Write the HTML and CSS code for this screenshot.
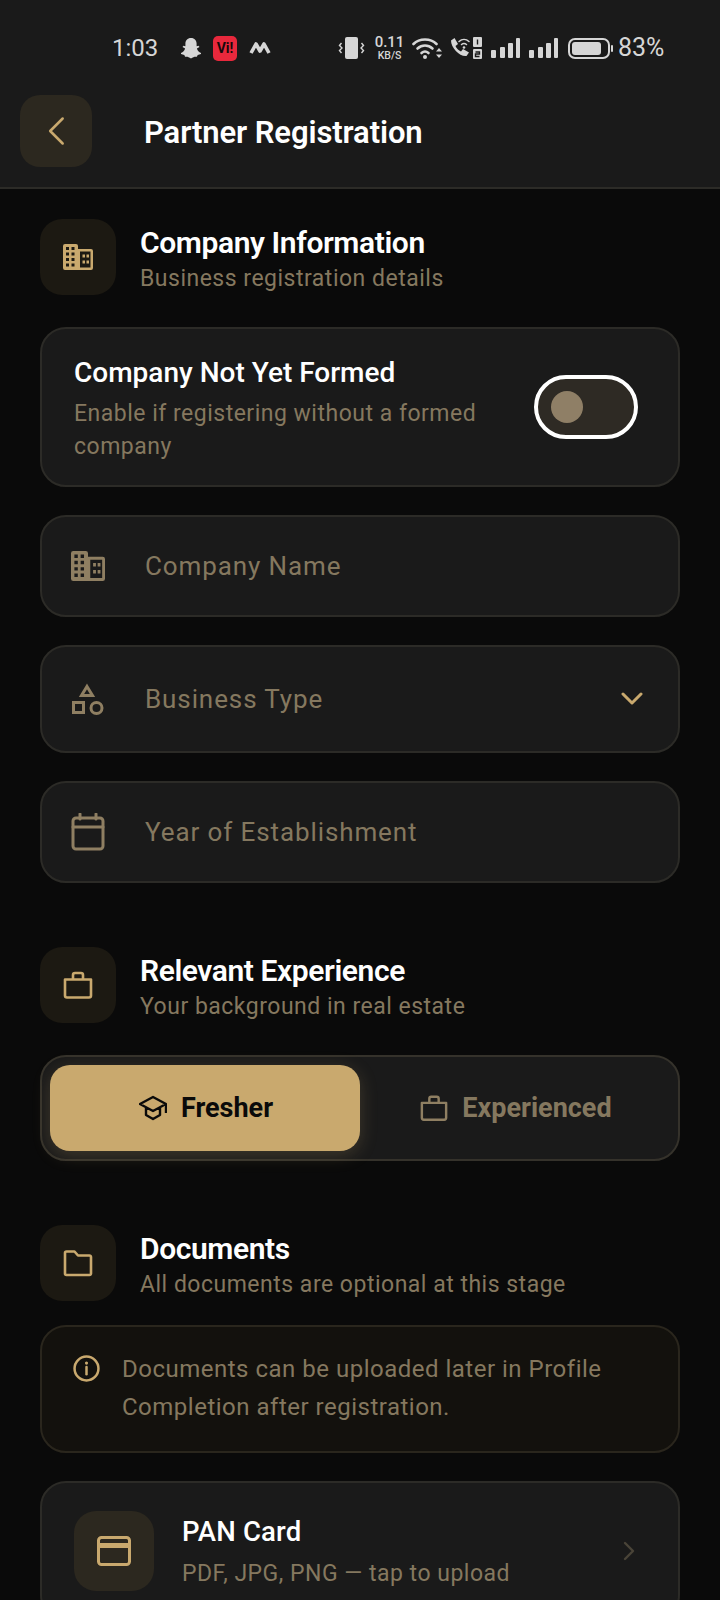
FILE: index.html
```html
<!DOCTYPE html>
<html lang="en">
<head>
<meta charset="utf-8">
<title>Partner Registration</title>
<link rel="stylesheet" href="styles.css">
</head>
<body>
<div class="screen">
  <header class="topbar">
    <div class="status">
      <div class="status-left">
        <span class="time">1:03</span>
        <svg class="st-snap" viewBox="0 0 22 21"><path fill="#d6d6d6" d="M11 0c3.600 0 5.600 2.600 5.600 5.600v2.600l2-.5.9 1.200-2.600 1.600c.6 2 2 3.600 4.100 4.500v1.100l-3.300 1-.8 1.700c-2-.4-3.600.1-5.900 1.700-2.300-1.600-3.900-2.100-5.900-1.700l-.8-1.700-3.300-1V15c2.100-.9 3.500-2.500 4.100-4.500L2.500 8.900l.9-1.200 2 .5V5.600C5.400 2.600 7.400 0 11 0z"/></svg>
        <span class="st-vi">Vi!</span>
        <svg class="st-m" viewBox="0 0 22 12"><path fill="none" stroke="#d6d6d6" stroke-width="3.600" stroke-linejoin="round" d="M2 11 7 2l4 7 4-7 5 9"/></svg>
      </div>
      <div class="status-right">
        <svg class="st-vib" viewBox="0 0 27 22"><rect x="7" y="0" width="13" height="22" rx="2" fill="#d6d6d6"/><path fill="none" stroke="#d6d6d6" stroke-width="1.400" d="M3.500 6 1.500 8.500 4 11 1.500 13.500 3.500 16M23.500 6l2 2.500L23 11l2.500 2.500-2 2.500"/></svg>
        <div class="st-speed"><span class="st-val">0.11</span><span class="st-unit">KB/S</span></div>
        <svg class="st-wifi" viewBox="0 0 30 22"><g fill="none" stroke="#d6d6d6" stroke-width="2.600" stroke-linecap="round"><path d="M1.500 7C7.500 1 18.500 1 24.500 7"/><path d="M5.500 11.500c4.500-4 10.500-4 15 0"/><path d="M9.500 16c2.300-2 4.700-2 7 0"/></g><circle cx="13" cy="20" r="2" fill="#d6d6d6"/><path fill="#d6d6d6" d="M27 11l3 3.500h-6zM27 21l3-3.500h-6z"/></svg>
        <svg class="st-call" viewBox="0 0 33 22"><path fill="#d6d6d6" d="M2 3.500 5.500 1l3.500 6-2.500 2c1 2.500 3 4.500 5.500 5.500l2-2.500 6 3.500-2.500 3.500C11 20 2 11 2 3.500z"/><g fill="none" stroke="#d6d6d6" stroke-width="1.500" stroke-linecap="round"><path d="M10 4.500c3-2.800 7-2.800 10 0"/><path d="M12.500 7.500c1.700-1.400 3.300-1.400 5 0"/></g><circle cx="15" cy="10.500" r="1.300" fill="#d6d6d6"/><rect x="24" y="0" width="9" height="10" rx="1" fill="#d6d6d6"/><rect x="24" y="12" width="9" height="10" rx="1" fill="#d6d6d6"/><path stroke="#1a1a1a" stroke-width="1.400" fill="none" d="M28.500 2.500v5M26.500 15h4v2h-4v2.500h4"/></svg>
        <svg class="st-sig" viewBox="0 0 29 20"><g fill="#d6d6d6"><rect x="0" y="12" width="5" height="8" rx="1"/><rect x="9" y="9" width="5" height="11" rx="1"/><rect x="17" y="5" width="5" height="15" rx="1"/><rect x="25" y="0" width="4" height="20" rx="1"/></g></svg>
        <svg class="st-sig" viewBox="0 0 29 20"><g fill="#d6d6d6"><rect x="0" y="12" width="5" height="8" rx="1"/><rect x="9" y="9" width="5" height="11" rx="1"/><rect x="17" y="5" width="5" height="15" rx="1"/><rect x="25" y="0" width="4" height="20" rx="1"/></g></svg>
        <svg class="st-bat" viewBox="0 0 45 21"><rect x="1" y="1" width="40" height="19" rx="6" fill="none" stroke="#d6d6d6" stroke-width="2"/><rect x="4" y="4" width="29" height="13" rx="3" fill="#d6d6d6"/><rect x="43" y="7" width="2" height="7" rx="1" fill="#d6d6d6"/></svg>
        <span class="pct">83%</span>
      </div>
    </div>
    <div class="navrow">
      <button class="back" type="button" aria-label="Back">
        <svg viewBox="0 0 24 36" class="back-ic"><path d="M20 3 5 18l15 15" fill="none" stroke="#c9a96e" stroke-width="3" stroke-linecap="round" stroke-linejoin="round"/></svg>
      </button>
      <h1 class="title">Partner Registration</h1>
    </div>
  </header>

  <main class="content">
    <section class="sec-head sec-first">
      <div class="sec-icon">
        <svg class="ic-build" viewBox="0 0 30 26"><path class="fill-gold" fill-rule="evenodd" d="M2 0h11a2 2 0 0 1 2 2v3h13a2 2 0 0 1 2 2v17a2 2 0 0 1-2 2H2a2 2 0 0 1-2-2V2a2 2 0 0 1 2-2zM3 3v3h3V3zm5.500 0v3h3V3zM3 8.500v3h3v-3zm5.500 0v3h3v-3zM3 14v3h3v-3zm5.500 0v3h3v-3zM3 19.500v3h3v-3zm5.500 0v3h3v-3zM17 7.500v16h10.500v-16zm2.500 3h2.500v3h-2.500zm4 0h2.500v3h-2.500zm-4 6h2.500v3h-2.500zm4 0h2.500v3h-2.500z"/></svg>
      </div>
      <div class="sec-text">
        <h2 class="sec-title">Company Information</h2>
        <p class="sec-sub">Business registration details</p>
      </div>
    </section>

    <div class="card toggle-card">
      <div class="toggle-text">
        <div class="toggle-title">Company Not Yet Formed</div>
        <div class="toggle-sub">Enable if registering without a formed company</div>
      </div>
      <div class="switch"><span class="thumb"></span></div>
    </div>

    <div class="card field">
      <svg class="field-ic field-build" viewBox="0 0 30 26" preserveAspectRatio="none"><path class="fill-muted" fill-rule="evenodd" d="M2 0h11a2 2 0 0 1 2 2v3h13a2 2 0 0 1 2 2v17a2 2 0 0 1-2 2H2a2 2 0 0 1-2-2V2a2 2 0 0 1 2-2zM3 3v3h3V3zm5.500 0v3h3V3zM3 8.500v3h3v-3zm5.500 0v3h3v-3zM3 14v3h3v-3zm5.500 0v3h3v-3zM3 19.500v3h3v-3zm5.500 0v3h3v-3zM17 7.500v16h10.500v-16zm2.500 3h2.500v3h-2.500zm4 0h2.500v3h-2.500zm-4 6h2.500v3h-2.500zm4 0h2.500v3h-2.500z"/></svg>
      <span class="field-label">Company Name</span>
    </div>

    <div class="card field field-tall">
      <svg class="field-ic" viewBox="0 0 34 34"><g fill="none" stroke="#8f7f62" stroke-width="3"><path d="M16 4.500 21.500 13.500H10.500z"/><rect x="2.500" y="20.500" width="10" height="10"/><circle cx="25.500" cy="26" r="5.500"/></g></svg>
      <span class="field-label">Business Type</span>
      <svg class="chev" viewBox="0 0 22 14"><path d="M2 2l9 9 9-9" fill="none" stroke="#c9a96e" stroke-width="3" stroke-linecap="round" stroke-linejoin="round"/></svg>
    </div>

    <div class="card field">
      <svg class="field-ic field-cal" viewBox="0 0 34 38"><g fill="none" stroke="#8f7f62" stroke-width="3" stroke-linecap="round"><rect x="2" y="5" width="30" height="31" rx="3"/><path d="M2 14h30M9 1v5M25 1v5"/></g></svg>
      <span class="field-label">Year of Establishment</span>
    </div>

    <section class="sec-head sec-next">
      <div class="sec-icon">
        <svg class="ic-30" viewBox="0 0 30 30"><path d="M2 9.500h26v16a2 2 0 0 1-2 2H4a2 2 0 0 1-2-2zM10 9.500V5a2 2 0 0 1 2-2h6a2 2 0 0 1 2 2v4.500" fill="none" stroke="#c9a96e" stroke-width="2.600" stroke-linejoin="round"/></svg>
      </div>
      <div class="sec-text">
        <h2 class="sec-title">Relevant Experience</h2>
        <p class="sec-sub">Your background in real estate</p>
      </div>
    </section>

    <div class="card segment">
      <div class="seg seg-on">
        <svg class="seg-ic" viewBox="0 0 28 28"><path d="M14 3 27 10 14 17 1 10zM7 13.500V21l7 4 7-4v-7.500M27 10v9" fill="none" stroke="#0a0a0a" stroke-width="2.400" stroke-linejoin="round"/></svg>
        <span>Fresher</span>
      </div>
      <div class="seg seg-off">
        <svg class="seg-ic" viewBox="0 0 30 30"><path d="M2 9.500h26v16a2 2 0 0 1-2 2H4a2 2 0 0 1-2-2zM10 9.500V5a2 2 0 0 1 2-2h6a2 2 0 0 1 2 2v4.500" fill="none" stroke="#8f7f62" stroke-width="2.600" stroke-linejoin="round"/></svg>
        <span>Experienced</span>
      </div>
    </div>

    <section class="sec-head sec-next">
      <div class="sec-icon">
        <svg class="ic-30" viewBox="0 0 30 30"><path d="M2 5a1.500 1.500 0 0 1 1.500-1.500h8L15 7.500h11.500A1.500 1.500 0 0 1 28 9v16.500a1.500 1.500 0 0 1-1.500 1.500h-23A1.500 1.500 0 0 1 2 25.500z" fill="none" stroke="#c9a96e" stroke-width="2.600" stroke-linejoin="round"/></svg>
      </div>
      <div class="sec-text">
        <h2 class="sec-title">Documents</h2>
        <p class="sec-sub">All documents are optional at this stage</p>
      </div>
    </section>

    <div class="card info">
      <svg class="info-ic" viewBox="0 0 26 26"><circle cx="13" cy="13" r="11.500" fill="none" stroke="#c9a96e" stroke-width="2.400"/><path d="M13 11.500v7" stroke="#c9a96e" stroke-width="2.400" stroke-linecap="round"/><circle cx="13" cy="7.800" r="1.500" fill="#c9a96e"/></svg>
      <p class="info-text">Documents can be uploaded later in Profile Completion after registration.</p>
    </div>

    <div class="card doc">
      <div class="doc-icon">
        <svg class="doc-svg" viewBox="0 0 34 30"><rect x="1.500" y="1.500" width="31" height="27" rx="3" fill="none" stroke="#c9a96e" stroke-width="3"/><rect x="2" y="7" width="30" height="5" fill="#c9a96e"/></svg>
      </div>
      <div class="doc-text">
        <div class="doc-title">PAN Card</div>
        <div class="doc-sub">PDF, JPG, PNG — tap to upload</div>
      </div>
      <svg class="doc-chev" viewBox="0 0 14 20"><path d="M3 2l8 8-8 8" fill="none" stroke="#4a4438" stroke-width="2.400" stroke-linecap="round" stroke-linejoin="round"/></svg>
    </div>
  </main>
</div>
</body>
</html>
```
FILE: styles.css
```css
* { box-sizing: border-box; margin: 0; padding: 0; }
html, body { width: 720px; height: 1600px; overflow: hidden; background: #0a0a0a; }
body { font-family: Roboto, "Liberation Sans", sans-serif; color: #fff; }
.screen { width: 720px; height: 1600px; overflow: hidden; }

.topbar { height: 189px; background: #1a1a1a; border-bottom: 2px solid #2c2b27; }
.status { height: 95px; padding: 35px 54px 0 112px; display: flex; justify-content: space-between; align-items: flex-start; color: #d6d6d6; }
.status-left, .status-right { display: flex; align-items: center; height: 26px; }
.time { font-size: 24px; width: 45px; line-height: 26px; }
.st-snap { width: 22px; height: 21px; margin-left: 23px; }
.st-vi { width: 24px; height: 25px; margin-left: 11px; border-radius: 5px; background: #e8283c; color: #16090a; font: 700 14px/25px Roboto, sans-serif; text-align: center; }
.st-m { width: 22px; height: 12px; margin-left: 12px; }
.st-vib { width: 27px; height: 22px; }
.st-speed { width: 27px; height: 26px; margin-left: 11px; display: flex; flex-direction: column; align-items: center; font-weight: 500; }
.st-val { font-size: 15px; line-height: 15px; }
.st-unit { font-size: 10.500px; line-height: 11px; }
.st-wifi { width: 30px; height: 22px; margin-left: 9px; }
.st-call { width: 33px; height: 22px; margin-left: 7px; }
.st-sig { width: 29px; height: 20px; margin-left: 9px; }
.st-bat { width: 45px; height: 21px; margin-left: 10px; }
.pct { font-size: 25px; line-height: 26px; margin-left: 5px; width: 48px; }

.navrow { display: flex; align-items: center; padding-left: 20px; }
.back { width: 72px; height: 72px; border: 0; border-radius: 20px; background: #2c281f; display: flex; align-items: center; justify-content: center; }
.back-ic { width: 20px; height: 30px; }
.title { margin-left: 52px; padding-top: 4px; height: 72px; font-size: 31px; font-weight: 600; line-height: 68px; letter-spacing: -0.1px; color: #fff; }

.content { padding: 0 40px; display: flex; flex-direction: column; }
.sec-head { display: flex; align-items: center; height: 76px; gap: 24px; }
.sec-first { margin-top: 30px; }
.sec-next { margin-top: 64px; }
.sec-icon { width: 76px; height: 76px; border-radius: 22px; background: #1c1912; display: flex; align-items: center; justify-content: center; flex: none; }
.ic-30 { width: 30px; height: 30px; }
.ic-build { width: 30px; height: 26px; }
.fill-gold { fill: #c9a96e; }
.fill-muted { fill: #8f7f62; }
.sec-text { display: flex; flex-direction: column; padding-top: 8px; }
.sec-title { font-size: 30px; font-weight: 600; line-height: 36px; letter-spacing: -0.4px; color: #fff; }
.sec-sub { font-size: 23px; line-height: 36px; letter-spacing: 0.5px; color: #85785f; }

.card { background: #1a1a1a; border: 2px solid #2c2b27; border-radius: 26px; }
.toggle-card { margin-top: 32px; height: 160px; padding: 0 40px 0 32px; display: flex; align-items: center; justify-content: space-between; }
.toggle-text { width: 420px; padding-top: 3px; }
.toggle-title { font-size: 28px; font-weight: 500; line-height: 36px; margin-bottom: 6px; }
.toggle-sub { font-size: 23px; line-height: 33px; letter-spacing: 0.5px; color: #85785f; }
.switch { width: 104px; height: 64px; flex: none; border: 4px solid #fff; border-radius: 32px; background: #2e2a24; display: flex; align-items: center; padding-left: 13px; }
.thumb { width: 32px; height: 32px; border-radius: 50%; background: #8f7f66; }

.field { margin-top: 28px; height: 102px; display: flex; align-items: center; padding: 0 22px 0 29px; }
.field-tall { height: 108px; }
.field-ic { width: 34px; height: 34px; flex: none; }
.field-build { height: 30px; }
.field-cal { height: 38px; }
.field-label { margin-left: 40px; font-size: 26px; letter-spacing: 0.9px; color: #85785f; flex: 1; }
.chev { width: 22px; height: 14px; flex: none; margin-right: 13px; }

.segment { margin-top: 32px; height: 106px; padding: 8px; display: flex; background: #1a1a1a; border-color: #35322b; }
.seg { width: 50%; display: flex; align-items: center; justify-content: center; gap: 14px; padding-left: 2px; font-size: 27px; font-weight: 700; }
.seg-on { background: #c9a96e; color: #0a0a0a; border-radius: 20px; box-shadow: 0 4px 18px rgba(201, 169, 110, 0.22); }
.seg-off { color: #85785f; }
.seg-ic { width: 28px; height: 28px; }

.info { margin-top: 24px; height: 128px; padding: 28px 32px 0 31px; display: flex; gap: 22px; align-items: flex-start; background: #13110d; border-color: #2a261d; }
.info-ic { width: 27px; height: 27px; flex: none; }
.info-text { font-size: 24px; line-height: 38px; letter-spacing: 0.5px; color: #85785f; margin-top: -5px; }

.doc { margin-top: 28px; height: 140px; padding: 28px 30px 28px 32px; display: flex; gap: 28px; align-items: flex-start; }
.doc-icon { width: 80px; height: 80px; border-radius: 22px; background: #2c281f; display: flex; align-items: center; justify-content: center; flex: none; }
.doc-svg { width: 34px; height: 30px; }
.doc-text { flex: 1; padding-top: 3px; }
.doc-title { font-size: 27.500px; font-weight: 500; line-height: 36px; letter-spacing: 0.2px; }
.doc-sub { font-size: 23px; line-height: 36px; letter-spacing: 0.5px; color: #85785f; margin-top: 6px; }
.doc-chev { width: 14px; height: 20px; margin-top: 30px; margin-right: 12px; }
```
